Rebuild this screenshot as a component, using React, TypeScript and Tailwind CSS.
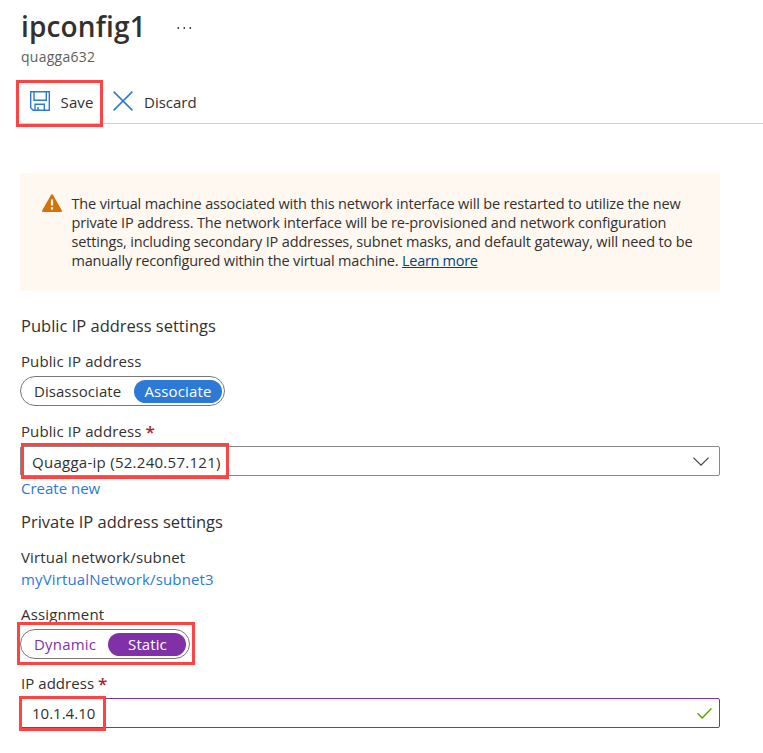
import type { ReactNode } from "react";

function Label({ children, className }: { children: ReactNode; className: string }) {
  return <div className={`whitespace-nowrap ${className}`}>{children}</div>;
}

function Highlight({ className }: { className: string }) {
  return <div className={`pointer-events-none absolute border-3 border-[#ff4343] ${className}`} />;
}

function SaveIcon() {
  return (
    <svg width="20" height="20" viewBox="0 0 20 20" fill="none" stroke="#2c7ad6" strokeWidth="1.4">
      <path d="M.7.7h18.6v18.6H3.2L.7 16.8z" />
      <path d="M4 .7v8.6h12.3V.7M5 19v-5.7h9.3V19M8 19v-3" />
    </svg>
  );
}

function Required() {
  return <span className="align-[-1px] text-[17px] leading-none font-semibold tracking-normal text-[#a4262c]">*</span>;
}

export default function App() {
  return (
    <main className="relative flex h-[753px] w-[763px] flex-col overflow-hidden bg-white pl-5 font-['Open_Sans','Noto_Sans',sans-serif] text-[15px] text-[#323130]">
      <header className="flex h-[47px] items-center pt-2">
        <h1 className="-mt-[3px] w-[156px] pl-px text-[28px] leading-[38px] font-semibold tracking-[0.15px]">ipconfig1</h1>
        <svg className="mt-px" width="16" height="4" viewBox="0 0 16 4" fill="#323130">
          <circle cx="2.3" cy="2" r=".9" />
          <circle cx="8.3" cy="2" r=".9" />
          <circle cx="14.3" cy="2" r=".9" />
        </svg>
      </header>
      <Label className="h-[34px] pl-px text-[14px] leading-5 tracking-[0.25px] text-[#605e5c]">quagga632</Label>

      <div className="flex h-[43px] items-center border-b border-[#d2d0ce] pl-[10px]">
        <span className="-mt-[2px]">
          <SaveIcon />
        </span>
        <Label className="mt-px ml-[10px] w-[53px] pl-[0.5px] tracking-[0.15px]">Save</Label>
        <svg className="-mt-[2px]" width="20" height="20" viewBox="0 0 20 20" stroke="#2c7ad6" strokeWidth="1.5">
          <path d="M.6.6l18.8 18.8M19.4.6L.6 19.4" />
        </svg>
        <Label className="mt-px ml-[11px]">Discard</Label>
      </div>

      <section className="mt-[49px] flex h-[118px] w-[700px] rounded-[2px] bg-[#fff8f1] pt-[21px] pl-[22px] text-[14.5px]">
        <svg className="shrink-0" width="20" height="18" viewBox="0 0 20 18">
          <path d="M10 1.2L19 17H1z" fill="#d4730c" stroke="#d4730c" strokeWidth="2" strokeLinejoin="round" />
          <path d="M10 5.5v6M10 13.2v2.2" stroke="#fff8f1" strokeWidth="2.2" />
        </svg>
        <div className="ml-[9.5px] leading-[19px] tracking-[-0.155px] whitespace-nowrap">
          <div className="tracking-[-0.165px]">The virtual machine associated with this network interface will be restarted to utilize the new</div>
          <div>private IP address. The network interface will be re-provisioned and network configuration</div>
          <div>settings, including secondary IP addresses, subnet masks, and default gateway, will need to be</div>
          <div className="tracking-[-0.18px]">
            manually reconfigured within the virtual machine.{" "}
            <a className="tracking-[-0.3px] text-[#004578] underline">Learn more</a>
          </div>
        </div>
      </section>

      <h2 className="mt-[23px] h-6 pl-px text-[16.5px] leading-6">Public IP address settings</h2>
      <Label className="mt-[13px] h-5 pl-px leading-5 tracking-[0.1px]">Public IP address</Label>
      <div className="mt-[5px] flex h-[30px] w-[205px] shrink-0 items-center rounded-full border border-[#7a7876] pl-[13px]">
        <Label className="mt-px w-[100px] tracking-[0.05px]">Disassociate</Label>
        <div className="flex h-[23px] w-[88px] items-center justify-center rounded-full bg-[#2c7ad6] text-white">
          <Label className="mt-px tracking-[0.15px]">Associate</Label>
        </div>
      </div>
      <Label className="mt-[15px] h-5 pl-px leading-5 tracking-[0.1px]">Public IP address <Required /></Label>
      <div className="mt-[5px] flex h-[30px] w-[700px] shrink-0 items-center justify-between rounded-[2px] border border-[#8a8886] pr-[10px] pl-[11px]">
        <Label className="mt-[2px] tracking-[0.27px]">Quagga-ip (52.240.57.121)</Label>
        <svg width="16" height="9" viewBox="0 0 16 9" fill="none" stroke="#484644" strokeWidth="1.3">
          <path d="M.4.6L8 8.1 15.6.6" />
        </svg>
      </div>
      <Label className="mt-[2px] h-5 pl-px leading-5 text-[#2c7ad6]">Create new</Label>
      <h2 className="mt-[12px] h-6 pl-px text-[16.5px] leading-6">Private IP address settings</h2>
      <Label className="mt-[13px] h-5 pl-px leading-5 tracking-[0.15px]">Virtual network/subnet</Label>
      <Label className="mt-[2px] h-5 pl-px leading-5 tracking-[0.15px] text-[#2c7ad6]">myVirtualNetwork/subnet3</Label>
      <Label className="mt-[15px] h-5 pl-px leading-5 tracking-[0.15px]">Assignment</Label>
      <div className="mt-[5px] flex h-[30px] w-[170px] shrink-0 items-center rounded-full border border-[#7a7876] pl-[13px]">
        <Label className="mt-px w-[74px] tracking-[0.2px] text-[#8131a7]">Dynamic</Label>
        <div className="flex h-[23px] w-[78px] items-center justify-center rounded-full bg-[#8131a7] text-white">
          <Label className="mt-px pl-px tracking-[0.1px]">Static</Label>
        </div>
      </div>
      <Label className="mt-[14px] h-5 pl-px leading-5 tracking-[0.05px]">IP address <Required /></Label>
      <div className="mt-[5px] flex h-[30px] w-[700px] shrink-0 items-center justify-between rounded-[2px] border border-[#8131a7] pr-[7px] pl-[11px]">
        <Label className="mt-px">10.1.4.10</Label>
        <svg width="15" height="11" viewBox="0 0 15 11" fill="none" stroke="#57a300" strokeWidth="1.4">
          <path d="M.5 5.3l4.7 4.6L14.4.6" />
        </svg>
      </div>

      <Highlight className="top-[80px] left-[16px] h-[47px] w-[87px]" />
      <Highlight className="top-[443px] left-[21px] h-[36px] w-[208px]" />
      <Highlight className="top-[622px] left-[17px] h-[43px] w-[178px]" />
      <Highlight className="top-[696px] left-[19px] h-[35px] w-[87px]" />
    </main>
  );
}
